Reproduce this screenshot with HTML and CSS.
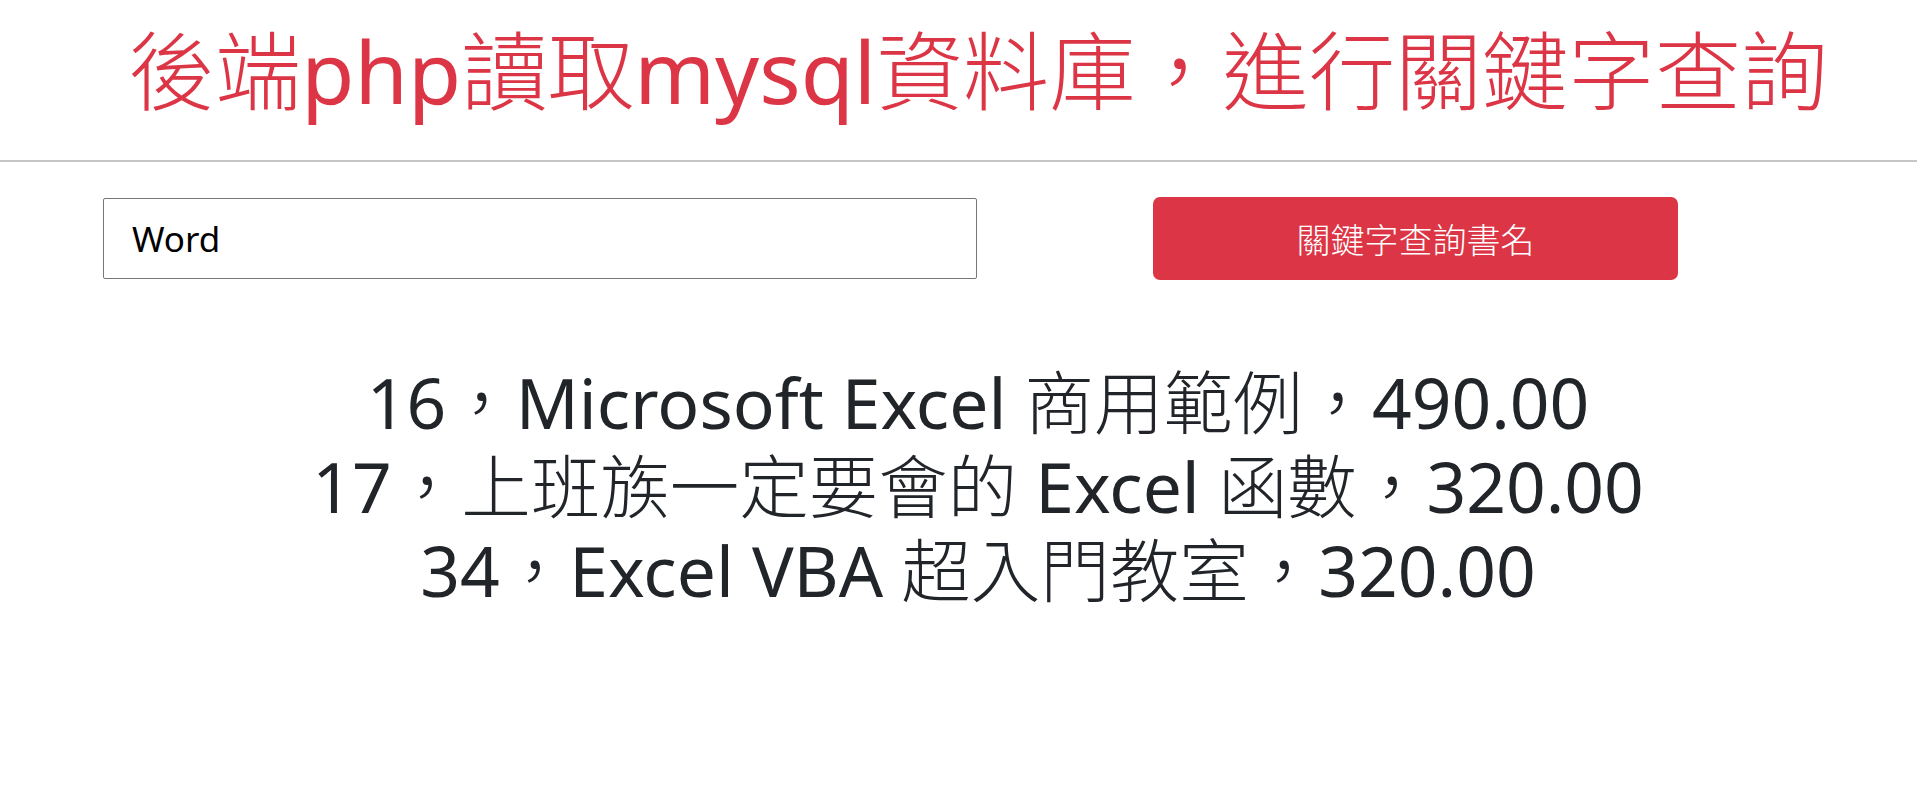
FILE: index.html
```html
<!DOCTYPE html>
<html lang="zh-Hant">
<head>
<meta charset="utf-8">
<title>關鍵字查詢</title>
<link rel="stylesheet" href="styles.css">
</head>
<body>
<header class="header">
  <h1 class="title">後端<span class="en">php</span>讀取<span class="en">mysql</span>資料庫，進行關鍵字查詢</h1>
</header>
<hr class="divider">
<form class="search">
  <input class="search-input" type="text" value="Word">
  <button class="search-btn" type="button">關鍵字查詢書名</button>
</form>
<section class="results">
  <div class="result"><span class="en">16</span>，<span class="en">Microsoft Excel </span>商用範例，<span class="en">490.00</span></div>
  <div class="result"><span class="en">17</span>，上班族一定要會的<span class="en"> Excel </span>函數，<span class="en">320.00</span></div>
  <div class="result"><span class="en">34</span>，<span class="en">Excel VBA </span>超入門教室，<span class="en">320.00</span></div>
</section>
</body>
</html>
```

FILE: styles.css
```css
html, body {
  margin: 0;
  padding: 0;
  background: #ffffff;
}
body {
  font-family: "Noto Sans", "Noto Sans CJK TC", sans-serif;
  font-weight: 300;
  color: #212529;
}
.en {
  font-weight: 400;
}
.header {
  padding-left: 39px;
  text-align: center;
}
.title {
  margin: 0;
  padding-top: 16px;
  font-size: 86.5px;
  font-weight: 300;
  line-height: 110px;
  color: #dc3545;
  white-space: nowrap;
}
.divider {
  margin: 34px 0 0 0;
  border: 0;
  height: 2px;
  background: #c6c6c6;
}
.search {
  display: flex;
  align-items: center;
  padding-left: 103px;
  margin-top: 35px;
  gap: 176px;
}
.search-input {
  box-sizing: border-box;
  width: 874px;
  height: 81px;
  border: 1px solid #767676;
  border-radius: 2px;
  padding: 0 0 0 28px;
  font-family: "Noto Sans", "Noto Sans CJK TC", sans-serif;
  font-weight: 400;
  font-size: 35px;
  color: #000;
  outline: none;
}
.search-btn {
  box-sizing: border-box;
  width: 525px;
  height: 83px;
  border: 0;
  border-radius: 7px;
  background: #dc3545;
  color: #fff;
  font-family: "Noto Sans CJK TC", sans-serif;
  font-weight: 300;
  font-size: 34px;
}
.results {
  padding-left: 39px;
  margin-top: 80px;
  text-align: center;
}
.result {
  font-size: 69.5px;
  line-height: 84px;
  white-space: nowrap;
}
```
